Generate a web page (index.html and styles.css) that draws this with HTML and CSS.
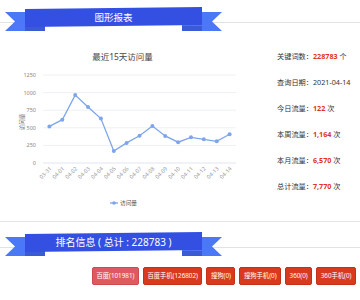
FILE: index.html
```html
<!DOCTYPE html>
<html lang="zh-CN">
<head>
  <meta charset="UTF-8" />
  <title>图形报表</title>
  <link rel="stylesheet" href="styles.css">
</head>
<body>
  <div class="sec-head">
    <div class="ribbon">
      <svg class="ribbon-bg" width="217" height="27" viewBox="0 0 217 27">
        <polygon class="tail" points="0,7 40,7 40,26 0,26 10,16.5"/>
        <polygon class="tail" points="177,7 217,7 207,16.5 217,26 177,26"/>
        <rect class="fold" x="20" y="21" width="20" height="5"/>
        <rect class="fold" x="177" y="21" width="20" height="5"/>
        <polygon class="band" points="20,4 197,2 197,20 20,22"/>
      </svg>
      <span class="ribbon-title">图形报表</span>
    </div>
  </div>

  <div class="report">
    <div class="chart-box">
      <div class="chart-title">最近15天访问量</div>
      <svg class="chart" width="245" height="152" viewBox="0 0 245 152">
        <g class="grid">
          <line x1="43" x2="236" y1="12" y2="12"/>
          <line x1="43" x2="236" y1="29.6" y2="29.6"/>
          <line x1="43" x2="236" y1="47.2" y2="47.2"/>
          <line x1="43" x2="236" y1="64.8" y2="64.8"/>
          <line x1="43" x2="236" y1="82.4" y2="82.4"/>
          <line class="axis" x1="43" x2="236" y1="100" y2="100"/>
        </g>
        <g class="y-labels">
          <text x="36" y="14">1250</text>
          <text x="36" y="31.6">1000</text>
          <text x="36" y="49.2">750</text>
          <text x="36" y="66.8">500</text>
          <text x="36" y="84.4">250</text>
          <text x="36" y="102">0</text>
        </g>
        <text class="axis-name" transform="translate(24,59) rotate(-90)">访问量</text>
        <g class="x-labels">
          <text transform="translate(52,106) rotate(-45)">03-31</text>
          <text transform="translate(64.8,106) rotate(-45)">04-01</text>
          <text transform="translate(77.7,106) rotate(-45)">04-02</text>
          <text transform="translate(90.5,106) rotate(-45)">04-03</text>
          <text transform="translate(103.4,106) rotate(-45)">04-04</text>
          <text transform="translate(116.3,106) rotate(-45)">04-05</text>
          <text transform="translate(129.1,106) rotate(-45)">04-06</text>
          <text transform="translate(142,106) rotate(-45)">04-07</text>
          <text transform="translate(154.9,106) rotate(-45)">04-08</text>
          <text transform="translate(167.7,106) rotate(-45)">04-09</text>
          <text transform="translate(180.6,106) rotate(-45)">04-10</text>
          <text transform="translate(193.5,106) rotate(-45)">04-11</text>
          <text transform="translate(206.3,106) rotate(-45)">04-12</text>
          <text transform="translate(219.2,106) rotate(-45)">04-13</text>
          <text transform="translate(232.1,106) rotate(-45)">04-14</text>
        </g>
        <polyline class="line" points="49.4,63.4 62.3,56.7 75.2,32.1 88,44 100.9,55.6 113.8,88 126.6,79.9 139.5,72.7 152.4,63 165.2,72.9 178.1,79.2 191,74.3 203.8,76.3 216.7,78.3 229.6,71.3"/>
        <g class="dots">
          <circle cx="49.4" cy="63.4" r="2"/>
          <circle cx="62.3" cy="56.7" r="2"/>
          <circle cx="75.2" cy="32.1" r="2"/>
          <circle cx="88" cy="44" r="2"/>
          <circle cx="100.9" cy="55.6" r="2"/>
          <circle cx="113.8" cy="88" r="2"/>
          <circle cx="126.6" cy="79.9" r="2"/>
          <circle cx="139.5" cy="72.7" r="2"/>
          <circle cx="152.4" cy="63" r="2"/>
          <circle cx="165.2" cy="72.9" r="2"/>
          <circle cx="178.1" cy="79.2" r="2"/>
          <circle cx="191" cy="74.3" r="2"/>
          <circle cx="203.8" cy="76.3" r="2"/>
          <circle cx="216.7" cy="78.3" r="2"/>
          <circle cx="229.6" cy="71.3" r="2"/>
        </g>
        <line class="line" x1="110" x2="118" y1="140" y2="140"/>
        <circle class="legend-dot" cx="114" cy="140" r="1.8"/>
        <text class="legend" x="120" y="142">访问量</text>
      </svg>
    </div>

    <div class="stats">
      <div class="stat">关键词数：<b>228783</b> 个</div>
      <div class="stat">查询日期：2021-04-14</div>
      <div class="stat">今日流量：<b>122</b> 次</div>
      <div class="stat">本周流量：<b>1,164</b> 次</div>
      <div class="stat">本月流量：<b>6,570</b> 次</div>
      <div class="stat">总计流量：<b>7,770</b> 次</div>
    </div>
  </div>

  <div class="sec-head second">
    <div class="ribbon">
      <svg class="ribbon-bg" width="217" height="27" viewBox="0 0 217 27">
        <polygon class="tail" points="0,7 40,7 40,26 0,26 10,16.5"/>
        <polygon class="tail" points="177,7 217,7 207,16.5 217,26 177,26"/>
        <rect class="fold" x="20" y="21" width="20" height="5"/>
        <rect class="fold" x="177" y="21" width="20" height="5"/>
        <polygon class="band" points="20,4 197,2 197,20 20,22"/>
      </svg>
      <span class="ribbon-title big">排名信息 ( 总计 : 228783 )</span>
    </div>
  </div>

  <div class="engines">
    <span class="engine first">百度(101981)</span>
    <span class="engine">百度手机(126802)</span>
    <span class="engine">搜狗(0)</span>
    <span class="engine">搜狗手机(0)</span>
    <span class="engine">360(0)</span>
    <span class="engine">360手机(0)</span>
  </div>
</body>
</html>
```

FILE: styles.css
```css
body {
  margin: 0;
  background: #fff;
  color: #333;
  font-family: "Noto Sans", "Noto Sans CJK SC", sans-serif;
}

/* section ribbon */
.sec-head {
  height: 38px;
  box-sizing: border-box;
  padding: 5px 0 0 5px;
  background: linear-gradient(#e2e2e2, #e2e2e2) 0 22px / 100% 1px no-repeat;
}
.sec-head.second { margin-top: 3px; }
.ribbon {
  display: grid;
  width: 217px;
  height: 27px;
}
.ribbon > * { grid-area: 1 / 1; }
.ribbon-bg { display: block; }
.tail { fill: #4b78f7; }
.fold { fill: #3a5bd4; }
.band { fill: #3450e2; }
.ribbon-title {
  justify-self: center;
  align-self: start;
  margin-top: 5.5px;
  font-size: 9.5px;
  line-height: 13px;
  color: #fff;
}
.ribbon-title.big { font-size: 10px; }

/* chart + stats */
.report {
  display: flex;
  height: 184px;
  box-sizing: border-box;
  padding-top: 13px;
  border-bottom: 1px solid #e6e6e6;
}
.chart-box { width: 245px; }
.chart-title {
  text-align: center;
  font-size: 8.5px;
  line-height: 12px;
  color: #444;
}
.chart { display: block; }
.grid line { stroke: #eef0f4; stroke-width: 1; }
.grid line.axis { stroke: #dfe5ef; }
.y-labels text {
  font-size: 5.5px;
  fill: #888;
  text-anchor: end;
}
.axis-name {
  font-size: 5.5px;
  fill: #777;
  text-anchor: middle;
}
.x-labels text {
  font-size: 5.5px;
  fill: #999;
  text-anchor: end;
}
.line {
  fill: none;
  stroke: #7ea5ec;
  stroke-width: 1.3;
}
.dots circle, .legend-dot { fill: #7ea5ec; }
.legend { font-size: 5.7px; fill: #555; }

.stats {
  margin-left: 32px;
  margin-top: -8px;
}
.stat {
  height: 26px;
  line-height: 26px;
  font-size: 7.2px;
  white-space: nowrap;
}
.stat b { color: #e2331b; }

/* engine buttons */
.engines {
  display: flex;
  justify-content: flex-end;
  gap: 4px;
  padding: 4px 4px 0 0;
}
.engine {
  height: 18px;
  line-height: 16px;
  box-sizing: border-box;
  padding: 0 3.5px;
  font-size: 6.3px;
  color: #fff;
  background: #d9391c;
  border: 1px solid #c53118;
  border-radius: 2px;
}
.engine.first {
  background: #de5a60;
  border-color: #cc4a50;
}
```
